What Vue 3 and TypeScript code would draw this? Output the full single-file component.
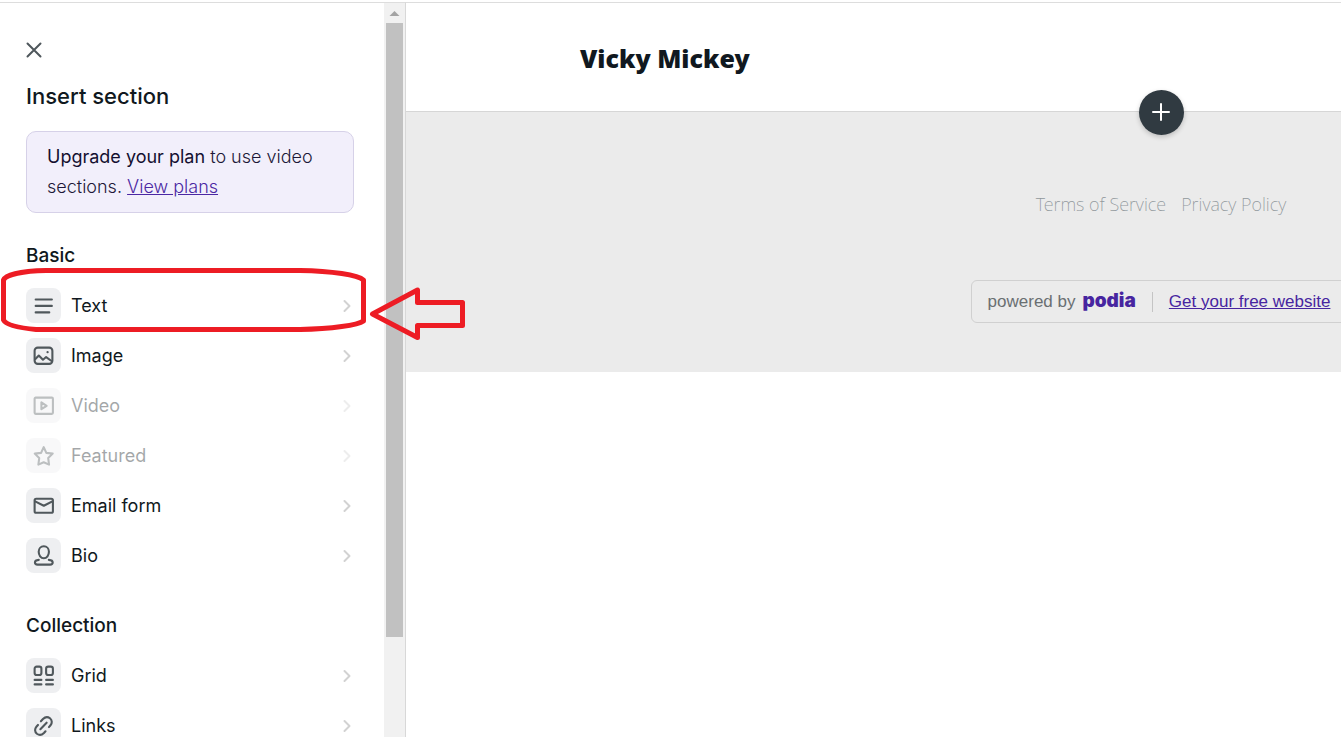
<script setup lang="ts">
interface Item {
  label: string
  icon: string[]
  disabled?: boolean
}
interface Group {
  title: string
  items: Item[]
}

const groups: Group[] = [
  {
    title: 'Basic',
    items: [
      { label: 'Text', icon: ['M2.500 4.200h15.500', 'M2.500 10.400h15.500', 'M2.500 16.600h13'] },
      {
        label: 'Image',
        icon: [
          'M4.500 2.500h11a3 3 0 0 1 3 3v9.500a3 3 0 0 1-3 3h-11a3 3 0 0 1-3-3V5.500a3 3 0 0 1 3-3z',
          'M2 13.500l3.500-3.500 4 4 3-2.500 5.500 4',
          'M13.800 6.800h.2',
        ],
      },
      {
        label: 'Video',
        disabled: true,
        icon: [
          'M2.500 2.500h15.500a1 1 0 0 1 1 1v13.500a1 1 0 0 1-1 1h-15.500a1 1 0 0 1-1-1V3.500a1 1 0 0 1 1-1z',
          'M8 7v6.500l5-3.250z',
        ],
      },
      {
        label: 'Featured',
        disabled: true,
        icon: ['M10.200 2l2.500 5.500 6.100.7-4.300 4.300.8 6.200-5.100-2.300-5.100 2.300.8-6.200-4.300-4.300 6.100-.7z'],
      },
      {
        label: 'Email form',
        icon: [
          'M3 3.500h14.500a1.500 1.500 0 0 1 1.500 1.500v10.500a1.500 1.500 0 0 1-1.500 1.500H3a1.500 1.500 0 0 1-1.500-1.500V5a1.500 1.500 0 0 1 1.500-1.500z',
          'M2 6l8.300 4.200L18.500 6',
        ],
      },
      {
        label: 'Bio',
        icon: [
          'M10.300 1.200c2.900 0 4.900 2.200 4.900 5.300s-2 6.200-4.900 6.200-4.900-3.100-4.900-6.200 2-5.300 4.900-5.300z',
          'M5.500 14.200c-2.300.2-3.700 1-3.700 2.500 0 1.300 1 2 2.500 2h12c1.500 0 2.500-.7 2.500-2 0-1.500-1.400-2.300-3.700-2.500',
        ],
      },
    ],
  },
  {
    title: 'Collection',
    items: [
      {
        label: 'Grid',
        icon: [
          'M3.500 1.500h2.500a2 2 0 0 1 2 2v4a2 2 0 0 1-2 2h-2.500a2 2 0 0 1-2-2v-4a2 2 0 0 1 2-2z',
          'M14.500 1.500h2.500a2 2 0 0 1 2 2v4a2 2 0 0 1-2 2h-2.500a2 2 0 0 1-2-2v-4a2 2 0 0 1 2-2z',
          'M1.500 14.200h6.500M12.500 14.200h6.500M1.500 18.500h6.500M12.500 18.500h6.500',
        ],
      },
      {
        label: 'Links',
        icon: [
          'M7.500 6l2-2.200c1.800-1.800 4.600-2.300 6.700-.7 2.200 1.800 2.200 4.700.5 6.700l-1.500 1.700',
          'M4.700 9.500l-1.500 1.700c-1.700 2-1.700 4.900.5 6.700 2.100 1.600 4.900 1.100 6.700-.7l1.500-1.700',
          'M7 13.500l6-6.200',
        ],
      },
    ],
  },
]
</script>

<template>
  <div class="app">
    <aside class="sidebar">
      <div class="panel">
        <button class="close" type="button" aria-label="Close">
          <svg width="16" height="16" viewBox="0 0 16 16"><path d="M1.500 1.500l13 13M14.500 1.500l-13 13" /></svg>
        </button>
        <h1>Insert section</h1>
        <p class="notice"><strong>Upgrade your plan</strong> to use video sections. <a href="#">View plans</a></p>
        <section v-for="g in groups" :key="g.title" class="group">
          <h2>{{ g.title }}</h2>
          <ul>
            <li v-for="item in g.items" :key="item.label">
              <button class="item" type="button" :disabled="item.disabled">
                <span class="tile">
                  <svg width="23" height="23" viewBox="-1 -1 22 22"><path v-for="d in item.icon" :key="d" :d="d" /></svg>
                </span>
                <span class="label">{{ item.label }}</span>
                <svg class="chevron" width="10" height="15" viewBox="0 0 10 15"><path d="M2.500 3l5 5-5 5" /></svg>
              </button>
            </li>
          </ul>
        </section>
      </div>
      <div class="scrollbar" aria-hidden="true">
        <svg width="20" height="20" viewBox="0 0 20 20"><path d="M10.500 8l5 5h-10z" /></svg>
        <div class="thumb"></div>
      </div>
    </aside>

    <main class="preview">
      <div class="site">
        <header class="site-header">
          <a class="brand" href="#">Vicky Mickey</a>
          <button class="add" type="button" aria-label="Add section">
            <svg width="19" height="19" viewBox="0 0 19 19"><path d="M9 1v16M1 9h16" /></svg>
          </button>
        </header>
        <footer class="site-footer">
          <nav>
            <a href="#">Terms of Service</a>
            <a href="#">Privacy Policy</a>
          </nav>
          <div class="badge">
            <span>powered by</span>
            <span class="podia">podia</span>
            <a href="#">Get your free website</a>
          </div>
        </footer>
      </div>
    </main>

    <svg class="marker" width="480" height="90" viewBox="0 0 480 90" aria-hidden="true">
      <path d="M46 10.500H300C332 11 358 15 363.500 20V61C358 65 332 69 300 69.500H36C20 68 6 65 3.500 60V20C6 14 24 11 46 10.500z" />
      <path d="M372.500 54L417.500 30V42.500H462.500V65.500H417.500V77.500z" />
    </svg>
  </div>
</template>

<style>
body {
  margin: 0;
  background: #fff;
}
</style>

<style scoped>
* {
  box-sizing: border-box;
}
.app {
  position: relative;
  display: flex;
  height: 100vh;
  margin: 0;
  padding-top: 2px;
  overflow: hidden;
  font-family: Inter, 'Liberation Sans', sans-serif;
  font-size: 18px;
  color: #101820;
}
.sidebar {
  display: flex;
  flex: 0 0 406px;
  border-top: 1px solid #ddd;
  border-right: 1px solid #d8d8d8;
  overflow: hidden;
}
.panel {
  flex: 1;
  padding: 37px 30px 0 26px;
}
button {
  padding: 0;
  border: 0;
  background: none;
  font: inherit;
  color: inherit;
  cursor: pointer;
}
svg {
  display: block;
  fill: none;
  stroke: currentColor;
  stroke-width: 2;
  stroke-linecap: round;
  stroke-linejoin: round;
}
.close {
  display: flex;
  align-items: center;
  height: 20px;
  color: #4f575c;
}
h1 {
  margin: 20px 0 0;
  font-size: 22px;
  line-height: 32px;
  font-weight: 500;
}
.notice {
  margin: 19px 0 0;
  width: 328px;
  padding: 10px 20px;
  border: 1px solid #d6d1e8;
  border-radius: 10px;
  background: #f2effb;
  line-height: 30px;
  font-weight: 300;
  color: #1d1838;
}
.notice strong {
  font-weight: 400;
  color: #140f30;
}
.notice a {
  color: #4b28a3;
}
.group {
  margin-top: 28px;
}
.group + .group {
  margin-top: 31px;
}
h2 {
  margin: 0;
  font-size: 19px;
  line-height: 30px;
  font-weight: 500;
}
ul {
  margin: 9px 0 0;
  padding: 0;
  list-style: none;
}
.item {
  display: flex;
  align-items: center;
  gap: 10px;
  width: 328px;
  height: 50px;
  text-align: left;
}
.item:disabled {
  opacity: 0.38;
}
.tile {
  display: grid;
  place-items: center;
  width: 35px;
  height: 35px;
  border-radius: 8px;
  background: #eeeff1;
  color: #50585c;
}
.label {
  flex: 1;
}
.chevron {
  margin-right: 2px;
  color: #d2d2d2;
}
.scrollbar {
  flex: 0 0 21px;
  background: #f1f1f1;
}
.scrollbar svg {
  fill: #a3a3a3;
  stroke: none;
}
.thumb {
  width: 17px;
  height: 614px;
  margin-left: 2px;
  background: #c1c1c1;
}
.preview {
  flex: 1;
  min-width: 0;
  overflow: hidden;
  border-top: 1px solid #ddd;
}
.site {
  min-width: 1510px;
}
.site-header {
  position: relative;
  display: flex;
  align-items: center;
  height: 109px;
  padding: 2px 174px 0;
  border-bottom: 1px solid #d6d6d6;
}
.brand {
  font-family: 'Noto Sans', sans-serif;
  font-size: 25px;
  font-weight: 900;
  color: #101820;
  text-decoration: none;
}
.add {
  position: absolute;
  left: 50%;
  bottom: -24px;
  display: grid;
  place-items: center;
  width: 45px;
  height: 45px;
  margin-left: -22px;
  border-radius: 50%;
  background: #303a41;
  color: #fff;
  box-shadow: 0 2px 5px rgba(0, 0, 0, 0.2);
}
.site-footer {
  display: flex;
  flex-direction: column;
  align-items: center;
  gap: 60px;
  padding: 77px 0 49px;
  background: #ebebeb;
}
nav {
  display: flex;
  gap: 15px;
  font-family: 'Noto Sans', sans-serif;
  font-weight: 200;
  line-height: 31px;
}
nav a {
  color: #90979b;
  text-decoration: none;
}
.badge {
  display: flex;
  align-items: center;
  height: 43px;
  padding: 0 20px 0 16px;
  border: 1px solid #d0d0d0;
  border-radius: 6px;
  font-family: 'Liberation Sans', Arial, sans-serif;
  font-size: 17px;
  color: #6a6f72;
}
.podia {
  margin-left: 7px;
  padding-bottom: 2px;
  font-family: Inter, sans-serif;
  font-size: 19px;
  line-height: 20px;
  font-weight: 900;
  color: #4725a0;
}
.badge a {
  margin-left: 16px;
  padding-left: 16px;
  border-left: 1px solid #c4c4c4;
  color: #4725a0;
}
.marker {
  position: absolute;
  top: 260px;
  left: 0;
  color: #ed1c24;
  pointer-events: none;
}
.marker path {
  stroke-width: 5;
}
</style>
